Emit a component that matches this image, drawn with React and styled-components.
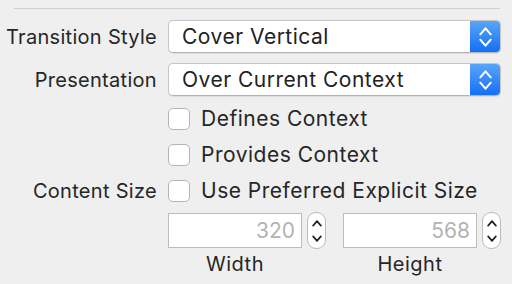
import React from "react";
import styled, { createGlobalStyle } from "styled-components";

const GlobalStyle = createGlobalStyle`
  html, body {
    margin: 0;
    padding: 0;
    background: #efefef;
  }
  body {
    font-family: Inter, "Liberation Sans", Arial, sans-serif;
    color: #262626;
  }
`;

const Panel = styled.div`
  width: 512px;
  height: 284px;
  overflow: hidden;
  padding-top: 8px;
  box-sizing: border-box;
`;

const Separator = styled.div`
  height: 1px;
  margin: 0 12px 0 14px;
  background: #cfcfcf;
`;

const Row = styled.div`
  display: grid;
  grid-template-columns: 157px 333px;
  column-gap: 11px;
  align-items: center;
  margin-top: ${(p) => p.$top}px;
`;

const Label = styled.div`
  font-size: 20px;
  letter-spacing: 0.3px;
  line-height: 22px;
  text-align: right;
  white-space: nowrap;
  color: #262626;
`;

const Popup = styled.div`
  height: 33px;
  display: flex;
  box-sizing: border-box;
  border: 1px solid #c6c6c6;
  border-bottom-color: #b4b4b4;
  border-radius: 5px;
  background: #fff;
  overflow: hidden;
  box-shadow: 0 0.5px 1px rgba(0, 0, 0, 0.08);
`;

const PopupText = styled.div`
  flex: 1;
  padding-left: 13px;
  font-size: 21px;
  letter-spacing: 0.5px;
  line-height: 31px;
  color: #222;
  white-space: nowrap;
`;

const PopupArrow = styled.div`
  width: 30px;
  display: flex;
  align-items: center;
  justify-content: center;
  background: linear-gradient(#58a5f9, #1470f5);
`;

const Check = styled.label`
  display: flex;
  align-items: center;
  gap: 11px;
  font-size: 21px;
  letter-spacing: 0.5px;
  line-height: 22px;
  height: 22px;
  color: #262626;
  white-space: nowrap;
`;

const Box = styled.span`
  width: 22px;
  height: 22px;
  box-sizing: border-box;
  border: 1px solid #b5b5b5;
  border-radius: 5px;
  background: #fff;
`;

const SizeGroup = styled.div`
  display: flex;
  gap: 17px;
`;

const SizeCol = styled.div`
  display: flex;
  flex-direction: column;
  align-items: flex-start;
`;

const FieldLine = styled.div`
  display: flex;
  align-items: center;
  gap: 5px;
`;

const NumberField = styled.div`
  width: 134px;
  height: 35px;
  box-sizing: border-box;
  border: 1px solid #bdbdbd;
  background: #fff;
  font-size: 21px;
  color: #b3b3b3;
  text-align: right;
  padding-right: 6px;
  line-height: 33px;
`;

const Stepper = styled.div`
  width: 19px;
  height: 37px;
  box-sizing: border-box;
  border: 1px solid #bcbcbc;
  border-radius: 9px;
  background: #fff;
  display: flex;
  align-items: center;
  justify-content: center;
`;

const Caption = styled.div`
  width: 134px;
  text-align: center;
  font-size: 20px;
  letter-spacing: 0.5px;
  line-height: 24px;
  margin-top: 3px;
  color: #262626;
`;

// up/down chevron pair, ch = height of one chevron
const Chevrons = ({ color, w, h, ch, sw }) => {
  const p = sw / 2 + 0.3;
  return (
    <svg width={w} height={h} viewBox={`0 0 ${w} ${h}`} fill="none">
      <path
        d={`M${p} ${p + ch} L${w / 2} ${p} L${w - p} ${p + ch}`}
        stroke={color}
        strokeWidth={sw}
        strokeLinecap="round"
        strokeLinejoin="round"
      />
      <path
        d={`M${p} ${h - p - ch} L${w / 2} ${h - p} L${w - p} ${h - p - ch}`}
        stroke={color}
        strokeWidth={sw}
        strokeLinecap="round"
        strokeLinejoin="round"
      />
    </svg>
  );
};

const PopupButton = ({ value }) => (
  <Popup>
    <PopupText>{value}</PopupText>
    <PopupArrow>
      <Chevrons color="#fff" w={13} h={20} ch={6} sw={2} />
    </PopupArrow>
  </Popup>
);

const SizeInput = ({ value, caption }) => (
  <SizeCol>
    <FieldLine>
      <NumberField>{value}</NumberField>
      <Stepper>
        <Chevrons color="#222" w={10} h={22} ch={4.5} sw={1.7} />
      </Stepper>
    </FieldLine>
    <Caption>{caption}</Caption>
  </SizeCol>
);

export default function App() {
  return (
    <>
      <GlobalStyle />
      <Panel>
        <Separator />
        <Row $top={11}>
          <Label>Transition Style</Label>
          <PopupButton value="Cover Vertical" />
        </Row>
        <Row $top={10}>
          <Label>Presentation</Label>
          <PopupButton value="Over Current Context" />
        </Row>
        <Row $top={12}>
          <Label />
          <Check>
            <Box />
            Defines Context
          </Check>
        </Row>
        <Row $top={14}>
          <Label />
          <Check>
            <Box />
            Provides Context
          </Check>
        </Row>
        <Row $top={14}>
          <Label>Content Size</Label>
          <Check>
            <Box />
            Use Preferred Explicit Size
          </Check>
        </Row>
        <Row $top={10}>
          <Label />
          <SizeGroup>
            <SizeInput value="320" caption="Width" />
            <SizeInput value="568" caption="Height" />
          </SizeGroup>
        </Row>
      </Panel>
    </>
  );
}
